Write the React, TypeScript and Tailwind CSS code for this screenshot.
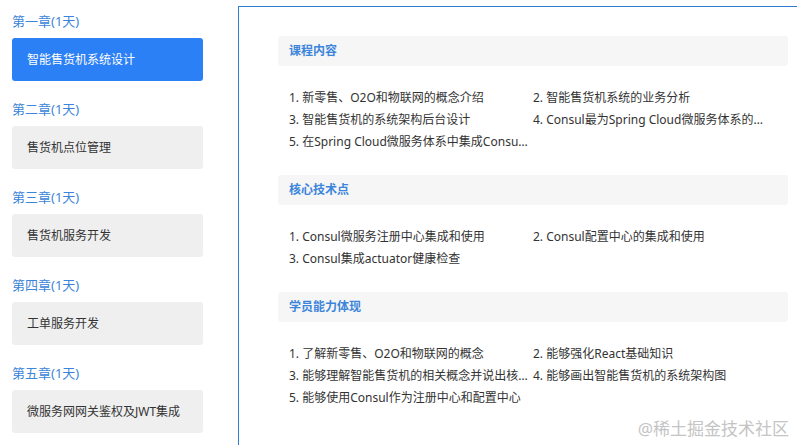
import React from 'react';

interface Chapter {
  label: string;
  title: string;
}

interface Section {
  title: string;
  items: string[];
}

const chapters: Chapter[] = [
  { label: '第一章(1天)', title: '智能售货机系统设计' },
  { label: '第二章(1天)', title: '售货机点位管理' },
  { label: '第三章(1天)', title: '售货机服务开发' },
  { label: '第四章(1天)', title: '工单服务开发' },
  { label: '第五章(1天)', title: '微服务网网关鉴权及JWT集成' },
];

const sections: Section[] = [
  {
    title: '课程内容',
    items: [
      '1. 新零售、O2O和物联网的概念介绍',
      '2. 智能售货机系统的业务分析',
      '3. 智能售货机的系统架构后台设计',
      '4. Consul最为Spring Cloud微服务体系的注册中心和配置中心',
      '5. 在Spring Cloud微服务体系中集成Consul注册中心',
    ],
  },
  {
    title: '核心技术点',
    items: [
      '1. Consul微服务注册中心集成和使用',
      '2. Consul配置中心的集成和使用',
      '3. Consul集成actuator健康检查',
    ],
  },
  {
    title: '学员能力体现',
    items: [
      '1. 了解新零售、O2O和物联网的概念',
      '2. 能够强化React基础知识',
      '3. 能够理解智能售货机的相关概念并说出核心业务流程',
      '4. 能够画出智能售货机的系统架构图',
      '5. 能够使用Consul作为注册中心和配置中心',
    ],
  },
];

const font = { fontFamily: '"Noto Sans", "Noto Sans CJK SC", sans-serif' };

const App: React.FC = () => {
  const active = 0;

  return (
    <div className="relative flex h-[445px] w-[797px] overflow-hidden bg-white" style={font}>
      {/* chapter list */}
      <div className="w-[238px] shrink-0 pl-[12px] pt-[11px]">
        {chapters.map((ch, i) => (
          <div key={ch.label} className={i === 0 ? '' : 'mt-[18px]'}>
            <div className="h-5 text-[13px] leading-5 text-[#3b85da]">{ch.label}</div>
            <div
              className={`mt-[7px] flex h-[43px] w-[191px] items-center rounded-[3px] pl-[15px] text-[12px] ${
                i === active ? 'bg-[#2c80f6] text-white' : 'bg-[#efefef] text-[#333]'
              }`}
            >
              {ch.title}
            </div>
          </div>
        ))}
      </div>

      {/* detail panel */}
      <div className="mt-[6px] flex-1 border-l border-t border-[#2f7dd3] pl-[39px] pr-[9px] pt-[29px]">
        {sections.map((sec) => (
          <div key={sec.title} className="mb-[22px]">
            <div className="flex h-[30px] items-center rounded-[3px] bg-[#f6f6f7] pl-[11px] text-[12px] font-bold text-[#3b85da]">
              {sec.title}
            </div>
            <div className="mt-[21px] grid grid-cols-2 px-[11px] text-[12px] leading-[22px] text-[#333]">
              {sec.items.map((item) => (
                <div key={item} className="truncate pr-[3px]">
                  {item}
                </div>
              ))}
            </div>
          </div>
        ))}
      </div>

      <div className="absolute bottom-[4px] right-[8px] text-[17px] leading-6 text-[#c4c4c4]">@稀土掘金技术社区</div>
    </div>
  );
};

export default App;
